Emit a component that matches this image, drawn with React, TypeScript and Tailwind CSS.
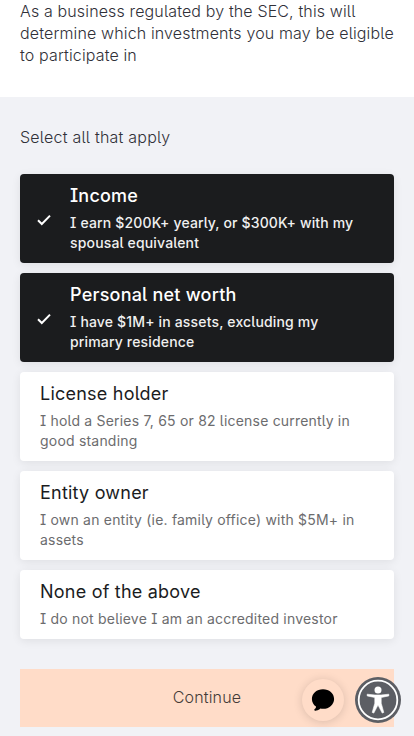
type Option = { title: string; lines: string[]; selected?: boolean };

const options: Option[] = [
  { title: "Income", lines: ["I earn $200K+ yearly, or $300K+ with my", "spousal equivalent"], selected: true },
  { title: "Personal net worth", lines: ["I have $1M+ in assets, excluding my", "primary residence"], selected: true },
  { title: "License holder", lines: ["I hold a Series 7, 65 or 82 license currently in", "good standing"] },
  { title: "Entity owner", lines: ["I own an entity (ie. family office) with $5M+ in", "assets"] },
  { title: "None of the above", lines: ["I do not believe I am an accredited investor"] },
];

function OptionCard({ title, lines, selected }: Option) {
  return (
    <button
      type="button"
      className={`flex w-full items-center rounded pt-2.5 pb-2.5 text-left shadow-[0_2px_10px_rgba(0,0,0,0.08)] ${
        selected ? "bg-[#1b1c1e] pl-[17px] text-white" : "bg-white pl-5 text-[#1b1c1e]"
      }`}
    >
      {selected && (
        <svg viewBox="0 0 14 12" className="mt-0.5 mr-[19px] h-3 w-3.5 shrink-0" fill="none" stroke="currentColor" strokeWidth="2">
          <path d="M1 6.2 4.8 10 13 1.6" />
        </svg>
      )}
      <span className="block whitespace-nowrap">
        <span className={`block text-[18px] leading-6 tracking-[0.22px] ${selected ? "font-medium" : "font-normal"}`}>{title}</span>
        <span
          className={`mt-[5px] block text-[14px] leading-5 ${
            selected ? "font-medium tracking-[0.16px] text-[#f0f0f0]" : "font-normal tracking-[0.2px] text-[#6c6c6e]"
          }`}
        >
          {lines.map((line) => (
            <span key={line} className="block">{line}</span>
          ))}
        </span>
      </span>
    </button>
  );
}

export default function App() {
  return (
    <div className="relative h-[736px] w-full overflow-hidden bg-[#f1f2f6] font-['Inter',sans-serif] text-[#303038] [font-feature-settings:'cv05','cv08']">
      <header className="h-[97px] bg-white pl-5 text-[16px] leading-[22px] font-light tracking-[0.14px] whitespace-nowrap">
        <p>As a business regulated by the SEC, this will</p>
        <p>determine which investments you may be eligible</p>
        <p>to participate in</p>
      </header>
      <main className="px-5 pt-[29px]">
        <h2 className="text-[16px] leading-[22px] font-light tracking-[0.22px]">Select all that apply</h2>
        <div className="mt-[26px] flex flex-col gap-2.5">
          {options.map((option) => (
            <OptionCard key={option.title} {...option} />
          ))}
        </div>
        <button type="button" className="mt-[30px] flex h-[58px] w-full items-center justify-center bg-[#ffdcc8] pb-0.5 text-[16px] font-light tracking-[0.15px] text-[#443b38]">
          Continue
        </button>
      </main>
      <button type="button" aria-label="Chat" className="absolute top-[679px] left-[302px] flex size-[42px] items-center justify-center rounded-full bg-[#ffdcc8] shadow-[0_1px_10px_rgba(0,0,0,0.15)]">
        <svg viewBox="0 0 24 24" className="size-6" fill="#000">
          <path d="M12 1.2C5.800 1.200 .9 5.400 .9 10.900c0 3.200 1.600 5.900 4.100 7.600.1 1.600-.7 2.100-1.700 2.900-.3 1 .8 1.400 2.200 1.200 1.700-.2 2.800-.9 3.900-2 .9.2 1.700.2 2.600.2 6.200 0 11.100-4.400 11.100-9.900S18.200 1.200 12 1.200Z" />
        </svg>
      </button>
      <button type="button" aria-label="Accessibility" className="absolute top-[677px] left-[355px] size-[46px]">
        <svg viewBox="0 0 46 46" className="size-full">
          <circle cx="23" cy="23" r="23" fill="#5c5e64" />
          <circle cx="23" cy="23" r="19.300" fill="none" stroke="#fff" strokeWidth="1.800" />
          <circle cx="23" cy="13" r="3.500" fill="#fff" />
          <path d="M12.200 17.200 20 18H26L33.800 17.200V18.900L26.200 20.500V26.200L28.800 35.400 27.200 36.100 23 28 18.800 36.100 17.200 35.400 19.800 26.200V20.500L12.200 18.900Z" fill="#fff" stroke="#fff" strokeWidth=".6" strokeLinejoin="round" />
        </svg>
      </button>
    </div>
  );
}
